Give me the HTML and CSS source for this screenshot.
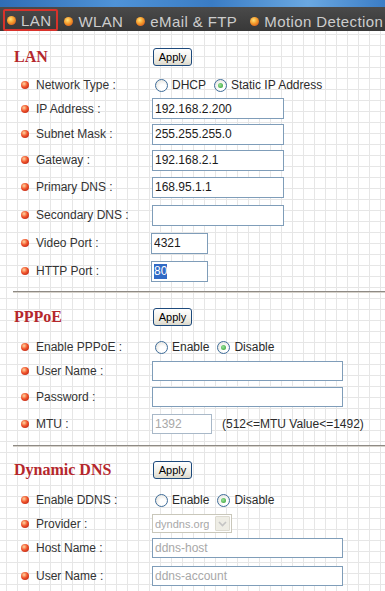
FILE: index.html
```html
<!DOCTYPE html>
<html lang="en">
<head>
    <meta charset="UTF-8">
    <meta name="viewport" content="width=device-width, initial-scale=1.0">
    <title>Network Settings</title>
    <link rel="stylesheet" href="styles.css">
</head>
<body>
    <div class="banner"></div>

    <nav class="menu">
        <a class="tab active"><span class="dot"></span>LAN</a>
        <a class="tab"><span class="dot"></span>WLAN</a>
        <a class="tab"><span class="dot"></span>eMail &amp; FTP</a>
        <a class="tab"><span class="dot"></span>Motion Detection</a>
    </nav>

    <main class="content">
        <section class="section lan">
            <div class="section-head">
                <h2>LAN</h2>
                <button class="apply">Apply</button>
            </div>
            <div class="fields">
                <div class="label"><span class="bullet"></span>Network Type :</div>
                <div class="control">
                    <label class="choice"><input type="radio" name="nettype">DHCP</label>
                    <label class="choice"><input type="radio" name="nettype" checked>Static IP Address</label>
                </div>

                <div class="label"><span class="bullet"></span>IP Address :</div>
                <div class="control"><input class="text mid" type="text" value="192.168.2.200"></div>

                <div class="label"><span class="bullet"></span>Subnet Mask :</div>
                <div class="control"><input class="text mid" type="text" value="255.255.255.0"></div>

                <div class="label"><span class="bullet"></span>Gateway :</div>
                <div class="control"><input class="text mid" type="text" value="192.168.2.1"></div>

                <div class="label"><span class="bullet"></span>Primary DNS :</div>
                <div class="control"><input class="text mid" type="text" value="168.95.1.1"></div>

                <div class="label"><span class="bullet"></span>Secondary DNS :</div>
                <div class="control"><input class="text mid" type="text" value=""></div>

                <div class="label"><span class="bullet"></span>Video Port :</div>
                <div class="control"><input class="text port" type="text" value="4321"></div>

                <div class="label"><span class="bullet"></span>HTTP Port :</div>
                <div class="control"><div class="text port fake"><span class="selected">80</span></div></div>
            </div>
        </section>

        <hr class="divider">

        <section class="section pppoe">
            <div class="section-head">
                <h2>PPPoE</h2>
                <button class="apply">Apply</button>
            </div>
            <div class="fields">
                <div class="label"><span class="bullet"></span>Enable PPPoE :</div>
                <div class="control">
                    <label class="choice"><input type="radio" name="pppoe">Enable</label>
                    <label class="choice"><input type="radio" name="pppoe" checked>Disable</label>
                </div>

                <div class="label"><span class="bullet"></span>User Name :</div>
                <div class="control"><input class="text wide" type="text" value=""></div>

                <div class="label"><span class="bullet"></span>Password :</div>
                <div class="control"><input class="text wide" type="password" value=""></div>

                <div class="label"><span class="bullet"></span>MTU :</div>
                <div class="control">
                    <input class="text mtu" type="text" value="1392" disabled>
                    <span class="hint">(512&lt;=MTU Value&lt;=1492)</span>
                </div>
            </div>
        </section>

        <hr class="divider">

        <section class="section ddns">
            <div class="section-head">
                <h2>Dynamic DNS</h2>
                <button class="apply">Apply</button>
            </div>
            <div class="fields">
                <div class="label"><span class="bullet"></span>Enable DDNS :</div>
                <div class="control">
                    <label class="choice"><input type="radio" name="ddns">Enable</label>
                    <label class="choice"><input type="radio" name="ddns" checked>Disable</label>
                </div>

                <div class="label"><span class="bullet"></span>Provider :</div>
                <div class="control">
                    <div class="select disabled">
                        <span class="select-text">dyndns.org</span>
                        <span class="select-arrow">
                            <svg width="9" height="6" viewBox="0 0 9 6"><path d="M1 1 L4.5 4.5 L8 1" fill="none" stroke="#c4c4c4" stroke-width="1.6"/></svg>
                        </span>
                    </div>
                </div>

                <div class="label"><span class="bullet"></span>Host Name :</div>
                <div class="control"><input class="text wide" type="text" value="ddns-host" disabled></div>

                <div class="label"><span class="bullet"></span>User Name :</div>
                <div class="control"><input class="text wide" type="text" value="ddns-account" disabled></div>
            </div>
        </section>
    </main>
</body>
</html>
```

FILE: styles.css
```css
* {
    box-sizing: border-box;
    margin: 0;
    padding: 0;
}

html, body {
    height: 100%;
}

body {
    font-family: 'Liberation Sans', Arial, sans-serif;
    font-size: 12px;
    color: #2a2a2a;
    background-color: #ffffff;
    overflow: hidden;
}

/* top banner strip */
.banner {
    height: 7px;
    background: linear-gradient(90deg, #2f6db4 0%, #4f93d8 30%, #3a7cc4 55%, #6aa8e2 80%, #3b7dc6 100%);
}

/* tab menu */
.menu {
    display: flex;
    align-items: flex-end;
    height: 24px;
    padding-left: 3px;
    overflow: hidden;
    white-space: nowrap;
    background: linear-gradient(#4a4a4a, #383838);
}

.tab {
    display: flex;
    flex-shrink: 0;
    align-items: center;
    height: 22px;
    padding: 0 5px 0 2px;
    margin-right: 2px;
    border: 2px solid transparent;
    border-bottom: none;
    font-size: 15px;
    letter-spacing: 0.4px;
    color: #cdcdcd;
    cursor: pointer;
}

.tab.active {
    border: 2px solid #d8322b;
    border-radius: 2px;
}

.dot {
    flex-shrink: 0;
    width: 9px;
    height: 9px;
    margin-right: 5px;
    border-radius: 50%;
    background: radial-gradient(circle at 40% 35%, #ffe27a 0%, #f59a2a 45%, #c8401a 100%);
}

/* grid paper content */
.content {
    min-height: calc(100% - 31px);
    padding: 16px 0 0 13px;
    background-color: #ffffff;
    background-image:
        linear-gradient(90deg, #e6e6e6 1px, transparent 1px),
        linear-gradient(#e6e6e6 1px, transparent 1px);
    background-size: 11px 11px;
    background-position: 6px 3px;
}

.section-head {
    display: grid;
    grid-template-columns: 139px auto;
    align-items: center;
    height: 20px;
}

.section-head h2 {
    margin-left: 1px;
    font-family: 'Liberation Serif', 'Times New Roman', serif;
    font-size: 16px;
    font-weight: bold;
    color: #b5272c;
}

.apply {
    justify-self: start;
    width: 39px;
    height: 18px;
    margin-left: 1px;
    font-family: 'Liberation Sans', Arial, sans-serif;
    font-size: 11px;
    color: #000000;
    background: linear-gradient(#ffffff, #f0efe8 60%, #dcd9cc);
    border: 1px solid #1d4a7c;
    border-radius: 3px;
    cursor: pointer;
}

.fields {
    display: grid;
    grid-template-columns: 139px auto;
    align-items: center;
    margin-top: 8px;
}

.lan .fields {
    margin-top: 7px;
    grid-template-rows: 22px 25px 26px 26px 28px 28px 28px 28px;
}

.pppoe .fields {
    grid-template-rows: 24px 24px 27px 28px;
}

.ddns .fields {
    grid-template-rows: 24px 23px 26px 29px;
}

.label {
    display: flex;
    align-items: center;
    padding-left: 8px;
    color: #333333;
}

.bullet {
    width: 8px;
    height: 8px;
    margin-right: 7px;
    border-radius: 50%;
    background: radial-gradient(circle at 38% 35%, #ffd6a0 0%, #f0522a 45%, #a8160e 100%);
}

.control {
    display: flex;
    align-items: center;
}

.choice {
    display: flex;
    align-items: center;
    margin-right: 5px;
}

.choice input {
    appearance: none;
    -webkit-appearance: none;
    width: 13px;
    height: 13px;
    margin: 0 4px 0 3px;
    border: 1px solid #3f6d9a;
    border-radius: 50%;
    background: radial-gradient(circle at 60% 65%, #ffffff 30%, #dcdad2 100%);
    position: relative;
}

.choice input:checked::after {
    content: '';
    position: absolute;
    top: 3px;
    left: 3px;
    width: 5px;
    height: 5px;
    border-radius: 50%;
    background: radial-gradient(circle at 40% 40%, #9be39b, #2a9a2a);
}

.text {
    height: 21px;
    padding: 0 2px;
    font-family: 'Liberation Sans', Arial, sans-serif;
    font-size: 12px;
    color: #1a1a1a;
    background-color: #ffffff;
    border: 1px solid #7f9db9;
    outline: none;
}

.text:disabled {
    color: #a8a8a8;
    background-color: #ffffff;
}

.mid {
    width: 132px;
}

.wide {
    width: 191px;
    height: 20px;
}

.port {
    width: 57px;
    margin-left: -1px;
}

.mtu {
    width: 60px;
    height: 20px;
    border-color: #a8b8c8;
}

.fake {
    display: flex;
    align-items: center;
}

.selected {
    color: #ffffff;
    background-color: #316ac5;
    line-height: 15px;
}

.hint {
    margin-left: 10px;
    color: #2a2a2a;
}

.select {
    display: flex;
    align-items: center;
    justify-content: space-between;
    width: 80px;
    height: 19px;
    padding: 0 1px 0 2px;
    overflow: hidden;
    border: 1px solid #c9c7ba;
    background-color: #ffffff;
}

.select-text {
    overflow: hidden;
    white-space: nowrap;
    font-size: 11px;
    color: #a8a8a8;
}

.select-arrow {
    display: flex;
    flex-shrink: 0;
    align-items: center;
    justify-content: center;
    width: 15px;
    height: 15px;
    background-color: #eeede5;
    border: 1px solid #dcdad0;
    border-radius: 1px;
}

.divider {
    height: 2px;
    margin: 6px 0 14px;
    border: none;
    border-top: 1px solid #8e8a84;
    border-bottom: 1px solid #d6d2cb;
}

.pppoe + .divider {
    margin-top: 7px;
    margin-bottom: 13px;
}
```
